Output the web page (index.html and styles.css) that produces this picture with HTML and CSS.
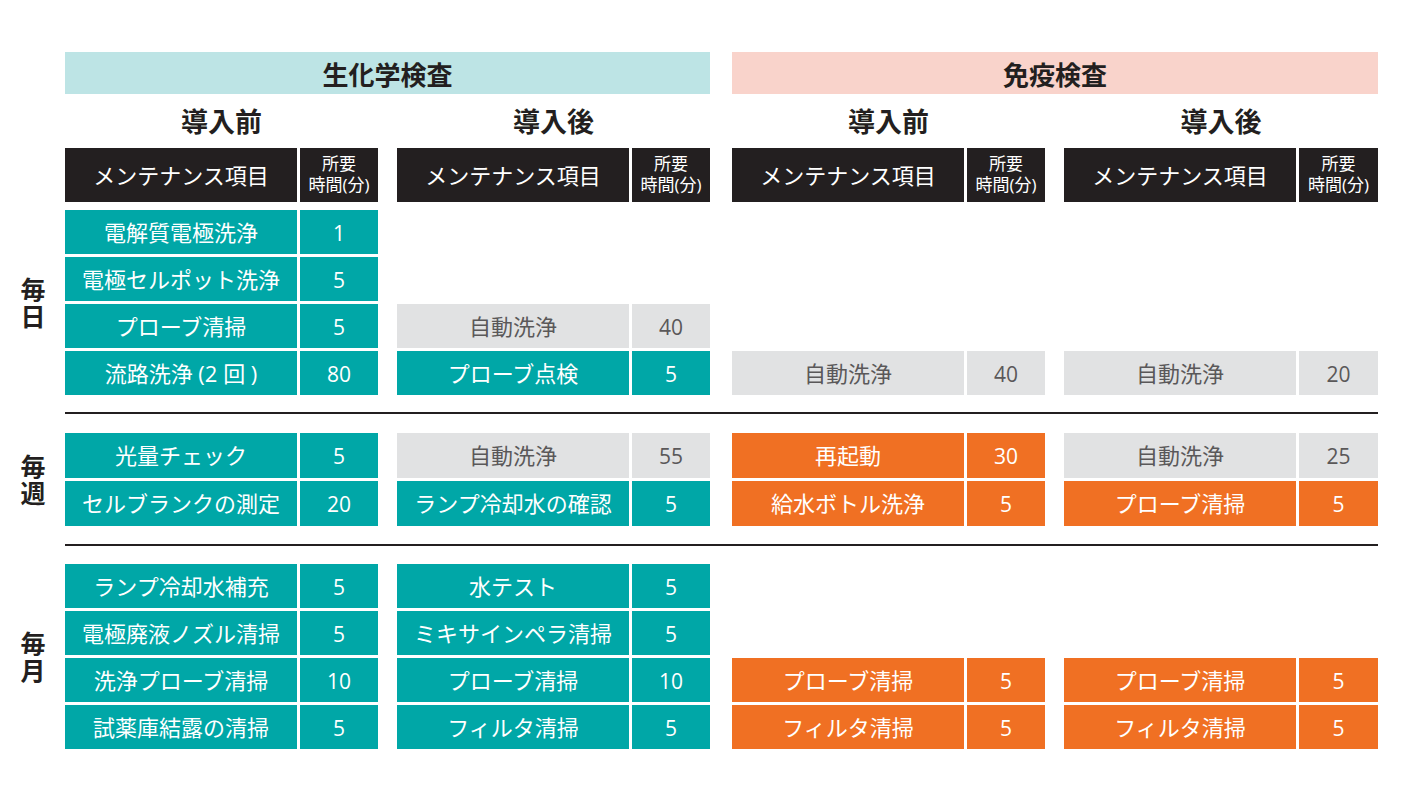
FILE: index.html
```html
<!DOCTYPE html>
<html lang="ja">
<head>
<meta charset="utf-8">
<title>メンテナンス比較</title>
<link rel="stylesheet" href="styles.css">
</head>
<body>
<div class="sheet">
  <div class="band cats">
    <div class="lab"></div>
    <div class="cat chem">生化学検査</div>
    <div class="cat immu">免疫検査</div>
  </div>

  <div class="band subs">
    <div class="lab"></div>
    <div class="pair">
      <div class="grp sub">導入前</div>
      <div class="grp sub">導入後</div>
    </div>
    <div class="pair wide">
      <div class="grp sub">導入前</div>
      <div class="grp sub">導入後</div>
    </div>
  </div>

  <div class="band">
    <div class="lab"></div>
    <div class="pair">
      <div class="grp"><div class="row head"><div class="name">メンテナンス項目</div><div class="time">所要<br>時間(分)</div></div></div>
      <div class="grp"><div class="row head"><div class="name">メンテナンス項目</div><div class="time">所要<br>時間(分)</div></div></div>
    </div>
    <div class="pair wide">
      <div class="grp"><div class="row head"><div class="name">メンテナンス項目</div><div class="time">所要<br>時間(分)</div></div></div>
      <div class="grp"><div class="row head"><div class="name">メンテナンス項目</div><div class="time">所要<br>時間(分)</div></div></div>
    </div>
  </div>

  <!-- 毎日 -->
  <div class="band section daily">
    <div class="lab"><span class="vt">毎日</span></div>
    <div class="pair">
      <div class="grp">
        <div class="row teal"><div class="name">電解質電極洗浄</div><div class="time">1</div></div>
        <div class="row teal"><div class="name">電極セルポット洗浄</div><div class="time">5</div></div>
        <div class="row teal"><div class="name">プローブ清掃</div><div class="time">5</div></div>
        <div class="row teal"><div class="name">流路洗浄 (2 回 )</div><div class="time">80</div></div>
      </div>
      <div class="grp">
        <div class="row blank"></div>
        <div class="row blank"></div>
        <div class="row gray"><div class="name">自動洗浄</div><div class="time">40</div></div>
        <div class="row teal"><div class="name">プローブ点検</div><div class="time">5</div></div>
      </div>
    </div>
    <div class="pair wide">
      <div class="grp">
        <div class="row blank"></div>
        <div class="row blank"></div>
        <div class="row blank"></div>
        <div class="row gray"><div class="name">自動洗浄</div><div class="time">40</div></div>
      </div>
      <div class="grp">
        <div class="row blank"></div>
        <div class="row blank"></div>
        <div class="row blank"></div>
        <div class="row gray"><div class="name">自動洗浄</div><div class="time">20</div></div>
      </div>
    </div>
  </div>

  <div class="rule rule1"></div>

  <!-- 毎週 -->
  <div class="band section weekly">
    <div class="lab"><span class="vt">毎週</span></div>
    <div class="pair">
      <div class="grp">
        <div class="row teal"><div class="name">光量チェック</div><div class="time">5</div></div>
        <div class="row teal"><div class="name">セルブランクの測定</div><div class="time">20</div></div>
      </div>
      <div class="grp">
        <div class="row gray"><div class="name">自動洗浄</div><div class="time">55</div></div>
        <div class="row teal"><div class="name">ランプ冷却水の確認</div><div class="time">5</div></div>
      </div>
    </div>
    <div class="pair wide">
      <div class="grp">
        <div class="row orange"><div class="name">再起動</div><div class="time">30</div></div>
        <div class="row orange"><div class="name">給水ボトル洗浄</div><div class="time">5</div></div>
      </div>
      <div class="grp">
        <div class="row gray"><div class="name">自動洗浄</div><div class="time">25</div></div>
        <div class="row orange"><div class="name">プローブ清掃</div><div class="time">5</div></div>
      </div>
    </div>
  </div>

  <div class="rule rule2"></div>

  <!-- 毎月 -->
  <div class="band section monthly">
    <div class="lab"><span class="vt">毎月</span></div>
    <div class="pair">
      <div class="grp">
        <div class="row teal"><div class="name">ランプ冷却水補充</div><div class="time">5</div></div>
        <div class="row teal"><div class="name">電極廃液ノズル清掃</div><div class="time">5</div></div>
        <div class="row teal"><div class="name">洗浄プローブ清掃</div><div class="time">10</div></div>
        <div class="row teal"><div class="name">試薬庫結露の清掃</div><div class="time">5</div></div>
      </div>
      <div class="grp">
        <div class="row teal"><div class="name">水テスト</div><div class="time">5</div></div>
        <div class="row teal"><div class="name">ミキサインペラ清掃</div><div class="time">5</div></div>
        <div class="row teal"><div class="name">プローブ清掃</div><div class="time">10</div></div>
        <div class="row teal"><div class="name">フィルタ清掃</div><div class="time">5</div></div>
      </div>
    </div>
    <div class="pair wide">
      <div class="grp">
        <div class="row blank"></div>
        <div class="row blank"></div>
        <div class="row orange"><div class="name">プローブ清掃</div><div class="time">5</div></div>
        <div class="row orange"><div class="name">フィルタ清掃</div><div class="time">5</div></div>
      </div>
      <div class="grp">
        <div class="row blank"></div>
        <div class="row blank"></div>
        <div class="row orange"><div class="name">プローブ清掃</div><div class="time">5</div></div>
        <div class="row orange"><div class="name">フィルタ清掃</div><div class="time">5</div></div>
      </div>
    </div>
  </div>
</div>
</body>
</html>
```

FILE: styles.css
```css
* { box-sizing: border-box; }

html, body {
  margin: 0;
  padding: 0;
  background: #ffffff;
}

body {
  width: 1408px;
  height: 792px;
  overflow: hidden;
  font-family: "Open Sans", "Noto Sans CJK JP", "Noto Sans", sans-serif;
  color: #231f20;
}

.sheet {
  padding-top: 52px;
}

.band {
  display: flex;
  column-gap: 22px;
}

.lab {
  width: 65px;
  flex: 0 0 65px;
  margin-right: -22px;
}

.cats {
  height: 42px;
}

.cat {
  width: 645px;
  height: 42px;
  display: flex;
  align-items: center;
  justify-content: center;
  font-family: "Noto Sans CJK JP", sans-serif;
  font-weight: 700;
  font-size: 26px;
  color: #231f20;
}

.cat.chem { background: #bde4e5; }
.cat.immu { background: #f9d3cb; width: 646px; }

.pair {
  width: 645px;
  display: flex;
  justify-content: space-between;
}

.pair.wide { width: 646px; }

.grp {
  width: 313px;
  display: flex;
  flex-direction: column;
  row-gap: 3px;
}

.pair.wide .grp:last-child { width: 314px; }

.subs { height: 54px; }

.sub {
  height: 54px;
  align-items: center;
  justify-content: center;
  font-family: "Noto Sans CJK JP", sans-serif;
  font-weight: 700;
  font-size: 27px;
  color: #231f20;
  padding-bottom: 2px;
}

.row {
  display: flex;
  column-gap: 3px;
  height: 44px;
}

.row .name {
  width: 232px;
  flex: 0 0 232px;
}

.row .time {
  flex: 1 1 auto;
}

.row .name,
.row .time {
  display: flex;
  align-items: center;
  justify-content: center;
  text-align: center;
  font-size: 22px;
  line-height: 1;
  padding-bottom: 1px;
}

.row .time {
  font-size: 21px;
  padding-top: 2px;
  padding-bottom: 0;
}

.row.head { height: 54px; }

.row.head .name,
.row.head .time {
  background: #231f20;
  color: #ffffff;
}

.row.head .time {
  font-size: 17px;
  line-height: 21px;
  padding-top: 0;
  padding-bottom: 2px;
}

.row.teal .name,
.row.teal .time {
  background: #00a7a7;
  color: #ffffff;
}

.row.orange .name,
.row.orange .time {
  background: #f07023;
  color: #ffffff;
}

.row.gray .name,
.row.gray .time {
  background: #e1e2e3;
  color: #5a5859;
}

.section .lab {
  display: flex;
  align-items: center;
  justify-content: center;
}

.vt {
  writing-mode: vertical-rl;
  font-family: "Noto Sans CJK JP", sans-serif;
  font-weight: 700;
  font-size: 25px;
  line-height: 1;
  letter-spacing: 2px;
  color: #231f20;
  padding-top: 2px;
}

.daily { margin-top: 8px; }

.weekly .row { height: 45px; }

.rule {
  margin-left: 65px;
  width: 1313px;
  height: 2px;
  background: #231f20;
}

.rule1 { margin-top: 17px; margin-bottom: 19px; }
.rule2 { margin-top: 18px; margin-bottom: 18px; }
```
